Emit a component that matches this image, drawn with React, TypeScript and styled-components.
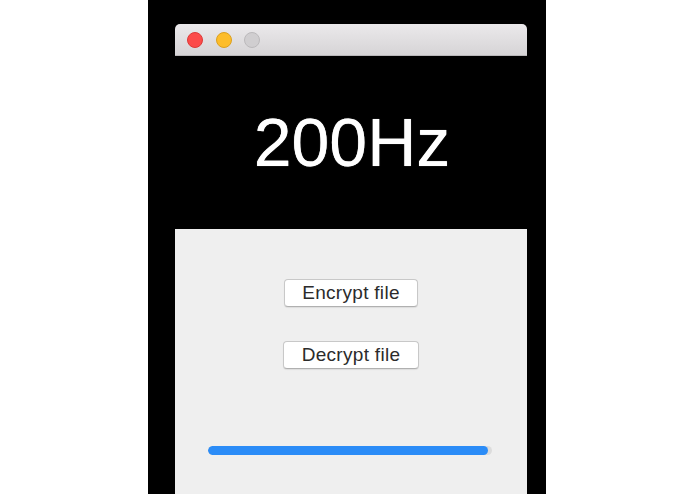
import React from 'react';
import styled, { createGlobalStyle } from 'styled-components';

const GlobalStyle = createGlobalStyle`
  html, body {
    margin: 0;
    padding: 0;
    background: #ffffff;
    font-family: "Liberation Sans", Arial, sans-serif;
  }
`;

const Page = styled.div`
  width: 695px;
  height: 494px;
  display: flex;
  justify-content: center;
  overflow: hidden;
`;

const Backdrop = styled.div`
  width: 398px;
  height: 494px;
  margin-left: -1px;
  background: #000;
  box-sizing: border-box;
  padding: 24px 19px 0 27px;
`;

const Window = styled.div`
  width: 352px;
  height: 470px;
  display: flex;
  flex-direction: column;
`;

const TitleBar = styled.div`
  height: 32px;
  box-sizing: border-box;
  border-radius: 5px 5px 0 0;
  background: linear-gradient(#ebe9eb, #d6d4d6);
  border-bottom: 1px solid #b9b7b9;
  display: flex;
  align-items: center;
  gap: 12.5px;
  padding-left: 12px;
`;

const Light = styled.span<{ $fill: string; $edge: string }>`
  width: 16px;
  height: 16px;
  border-radius: 50%;
  box-sizing: border-box;
  background: ${p => p.$fill};
  border: 1px solid ${p => p.$edge};
`;

const Display = styled.div`
  height: 173px;
  background: #000;
  display: flex;
  align-items: center;
  justify-content: center;
`;

const Freq = styled.span`
  color: #fff;
  font-size: 68px;
  line-height: 1;
  margin-top: -2px;
  padding-left: 2px;
  text-shadow: 0 0 0.7px #fff;
`;

const Panel = styled.div`
  flex: 1;
  background: #efefef;
  display: flex;
  flex-direction: column;
  align-items: center;
  padding-top: 50px;
`;

const Button = styled.button<{ $w: number }>`
  width: ${p => p.$w}px;
  height: 28px;
  box-sizing: border-box;
  background: #fff;
  border: 1px solid #c8c8c8;
  border-bottom-color: #b0b0b0;
  border-radius: 4px;
  box-shadow: 0 1px 1px rgba(0, 0, 0, 0.08);
  font-family: "Liberation Sans", Arial, sans-serif;
  font-size: 19px;
  letter-spacing: 0.3px;
  color: #2b2b2b;
  padding: 0;
  line-height: 26px;
  & + & {
    margin-top: 34px;
  }
`;

const Track = styled.div`
  width: 284px;
  height: 9px;
  margin-top: 77px;
  margin-right: 2px;
  border-radius: 5px;
  background: #dcdcdc;
  overflow: hidden;
`;

const Fill = styled.div`
  height: 100%;
  border-radius: 5px;
  background: #2b8cf7;
`;

export default function App() {
  const progress = 0.985;
  return (
    <Page>
      <GlobalStyle />
      <Backdrop>
        <Window>
          <TitleBar>
            <Light $fill="#fc4b4a" $edge="#dd3a38" />
            <Light $fill="#fdbd2a" $edge="#dca01f" />
            <Light $fill="#d0ced0" $edge="#bbb9bb" />
          </TitleBar>
          <Display>
            <Freq>200Hz</Freq>
          </Display>
          <Panel>
            <Button $w={134}>Encrypt file</Button>
            <Button $w={136}>Decrypt file</Button>
            <Track>
              <Fill style={{ width: `${progress * 100}%` }} />
            </Track>
          </Panel>
        </Window>
      </Backdrop>
    </Page>
  );
}
